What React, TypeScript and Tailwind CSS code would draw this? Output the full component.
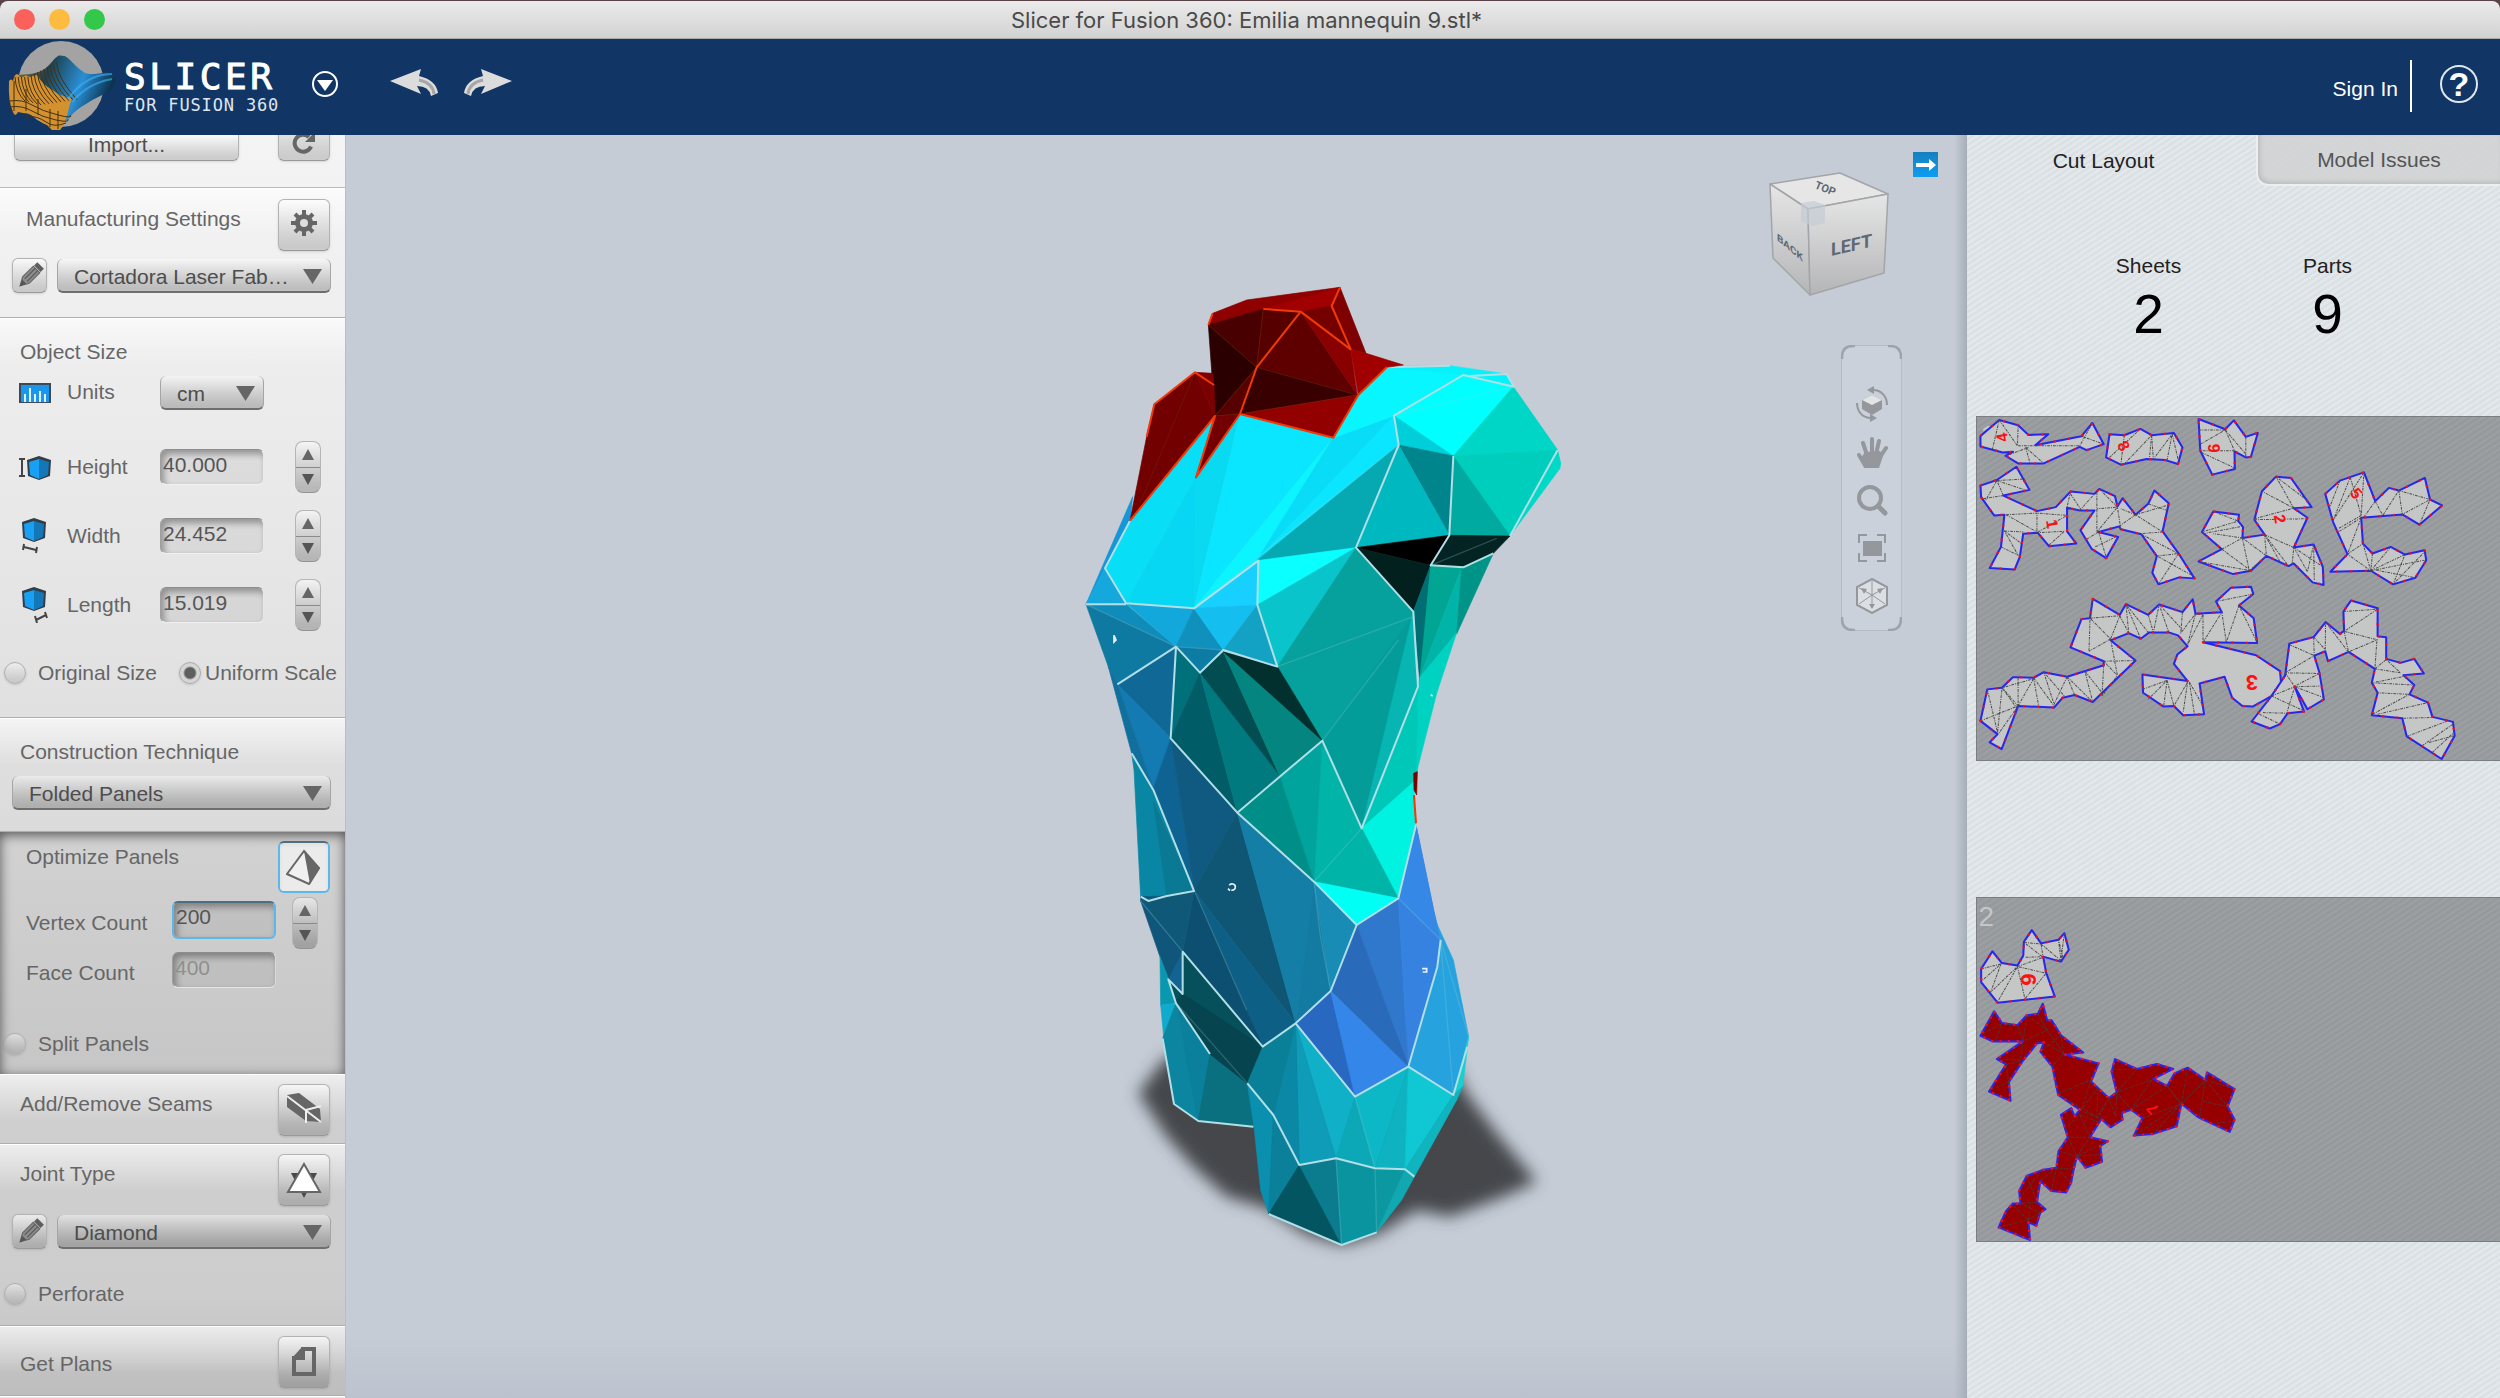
import type { ReactNode } from "react";

type Face = [string, string];

// Mesh coordinates are thirds of a canvas unit, measured from the model's origin.
const BODY_FACES: Face[] = [
  ["218,680 210,752 135,895 78,1003", "#1496d8"],
  ["210,752 465,438 408,622 198,1000 135,895", "#08def5"],
  ["408,622 198,1000 402,1015", "#07d7f2"],
  ["408,622 540,432 402,1015", "#09daf2"],
  ["540,432 820,503 402,1015", "#0ae6ff"],
  ["820,503 590,872 402,1015", "#0af5ff"],
  ["820,503 1002,437 590,872", "#08dcf6"],
  ["1002,437 1016,525 590,872", "#0ae6ff"],
  ["820,503 895,375 980,292 1210,315 1002,437", "#08f6ff"],
  ["980,292 1030,288 1170,287 1340,312 1360,350 1210,315", "#06f2fb"],
  ["1210,315 1360,350 1180,558 1002,437", "#00ffff"],
  ["1002,437 1180,558 1016,525", "#00cfd9"],
  ["1360,350 1493,540 1180,558", "#00d6c6"],
  ["1180,558 1493,540 1350,798", "#00cebc"],
  ["1493,540 1502,580 1500,595 1350,798", "#00d8c8"],
  ["1180,558 1350,798 1168,796", "#00aaa0"],
  ["1180,558 1168,796 1016,525", "#00858c"],
  ["1016,525 1168,796 888,833", "#00b8bf"],
  ["1016,525 888,833 590,872", "#06a8b2"],
  ["888,833 1168,796 1112,886", "#000000"],
  ["1168,796 1350,798 1300,850 1210,892 1112,886", "#032422"],
  ["888,833 1112,886 1060,1025", "#02201e"],
  ["590,872 888,833 592,1005", "#0affff"],
  ["592,1005 888,833 652,1190", "#09c4ca"],
  ["888,833 1060,1025 905,1675 787,1412 652,1190", "#06a09d"],
  ["1060,1035 905,1675 787,1412", "#039c99"],
  ["1060,1025 1074,1250 905,1675", "#07b5b3"],
  ["1060,1025 1112,886 1080,1240", "#006e72"],
  ["1112,886 1205,893 1080,1222", "#00a594"],
  ["1205,893 1190,1090 1080,1222", "#00b5a8"],
  ["1205,893 1300,850 1190,1092", "#009388"],
  ["1190,1088 1080,1222 1074,1250 1066,1545 1074,1490 1130,1270", "#00d2c2"],
  ["1074,1250 1068,1530 905,1675", "#00c8b8"],
  ["905,1675 1062,1535 1065,1665 1015,1885", "#00f2e0"],
  ["787,1412 905,1675 1015,1885 762,1835", "#00b4a8"],
  ["787,1412 762,1835 658,1515", "#00a49d"],
  ["658,1515 762,1835 532,1628", "#008e88"],
  ["762,1835 1015,1885 890,1965", "#00fff5"],
  ["348,1130 420,1208 332,1405", "#00707a"],
  ["420,1208 532,1628 332,1405", "#005c66"],
  ["420,1208 658,1515 532,1628", "#007a7e"],
  ["420,1208 490,1145 658,1515", "#024d52"],
  ["490,1145 787,1412 658,1515", "#04857f"],
  ["490,1145 652,1190 787,1412", "#02302e"],
  ["78,1003 135,895 198,1000", "#14a8dc"],
  ["78,1003 198,1003 348,1130", "#0f8cba"],
  ["78,1003 348,1130 172,1243 145,1190", "#0e7aa2"],
  ["198,1000 402,1015 348,1130", "#12a8dc"],
  ["402,1015 348,1130 490,1140", "#1090bd"],
  ["402,1015 592,872 592,1005", "#18d0ff"],
  ["402,1015 592,1005 490,1140", "#14bff0"],
  ["592,1005 652,1190 490,1140", "#14a2c4"],
  ["348,1130 490,1140 420,1208", "#0d7ca4"],
  ["348,1130 332,1405 172,1243", "#0f6896"],
  ["172,1243 332,1405 280,1555", "#137ab2"],
  ["145,1190 172,1243 280,1555 215,1450", "#106f9c"],
  ["332,1405 280,1555 402,1860", "#0f6392"],
  ["332,1405 532,1628 402,1860", "#105a82"],
  ["215,1450 280,1555 402,1863 265,1893 242,1880 222,1500", "#0a86a5"],
  ["280,1595 402,1863 320,1880", "#0a7a94"],
  ["532,1628 402,1860 707,2260", "#0e5674"],
  ["532,1628 762,1835 707,2260", "#147ea6"],
  ["762,1835 707,2260 812,2163", "#137aa2"],
  ["762,1835 890,1965 812,2163", "#188cb5"],
  ["402,1860 707,2260 608,2330", "#0e5f85"],
  ["402,1860 608,2330 368,2045", "#0c4f70"],
  ["242,1893 402,1860 368,2045", "#0f5878"],
  ["242,1880 320,1878 402,1860 242,1893", "#0f5878"],
  ["242,1893 368,2045 325,2130 300,2060", "#10567a"],
  ["300,2060 325,2125 348,2200 302,2205", "#0a98b0"],
  ["302,2205 348,2200 312,2310", "#10aacc"],
  ["348,2200 308,2305 342,2502 415,2553", "#0c85a0"],
  ["348,2200 450,2352 415,2553", "#0b809c"],
  ["450,2352 562,2440 582,2572 415,2553", "#0a7080"],
  ["368,2045 608,2330 562,2440 450,2352 345,2190 325,2128", "#05505a"],
  ["368,2172 608,2330 562,2440 450,2352 345,2195", "#06444f"],
  ["368,2045 368,2172 325,2128", "#126392"],
  ["890,1965 1015,1885 1045,2390", "#3078cc"],
  ["890,1965 812,2163 1045,2390", "#2a6aba"],
  ["1015,1885 1068,1665 1122,1925 1142,2010 1135,2090 1045,2390", "#3582e0"],
  ["1015,1885 1068,1665 1122,1925 1142,2010", "#3688e6"],
  ["812,2163 707,2260 885,2480", "#2868c0"],
  ["812,2163 1045,2390 885,2480", "#3486e8"],
  ["1142,2010 1130,1960 1180,2070 1226,2300 1180,2475 1045,2390 1132,2090", "#26a2de"],
  ["1226,2300 1208,2450 1180,2475", "#18d0d0"],
  ["707,2260 885,2480 828,2665", "#10b0c8"],
  ["707,2260 828,2665 718,2685", "#0e9cb8"],
  ["707,2260 718,2685 640,2535", "#0b88a5"],
  ["707,2260 608,2330 562,2440 640,2535", "#0a8098"],
  ["885,2480 828,2665 945,2695", "#0ca8b8"],
  ["885,2480 1045,2390 945,2695", "#0cb8c6"],
  ["1045,2390 945,2695 1035,2698", "#0eb2c0"],
  ["1045,2390 1180,2475 1035,2698", "#10c8d4"],
  ["1180,2475 1208,2450 1190,2490 1063,2720 1035,2698", "#10b4be"],
  ["562,2440 640,2535 626,2832 602,2760 582,2570", "#0a90ae"],
  ["640,2535 718,2685 626,2832", "#0a809a"],
  ["718,2685 626,2832 845,2925", "#045562"],
  ["718,2685 828,2665 845,2925", "#0a7c8e"],
  ["828,2665 945,2695 950,2887 845,2925", "#0a94a0"],
  ["945,2695 1035,2698 950,2887", "#0c98a0"],
  ["1035,2698 1063,2720 1025,2790 950,2887", "#12a8b2"],
];

const NECK_FACES: Face[] = [
  ["445,165 458,130 560,90 840,52 815,108 722,125 610,117", "#8f0000"],
  ["840,52 815,108 722,125 610,117", "#a00000"],
  ["445,165 610,117 590,292", "#480000"],
  ["445,165 590,292 465,438", "#2b0000"],
  ["610,117 722,125 590,292", "#560000"],
  ["722,125 590,292 892,375", "#5e0000"],
  ["722,125 892,375 872,238", "#880000"],
  ["722,125 815,108 872,238", "#750000"],
  ["815,108 840,52 918,250 872,238", "#7e0000"],
  ["872,238 918,250 1030,285 980,292 895,375", "#a00000"],
  ["590,292 465,438 540,432", "#560000"],
  ["590,292 540,432 892,375", "#380000"],
  ["540,432 892,375 820,503", "#920000"],
  ["405,307 283,403 260,500 210,752 465,438", "#720000"],
  ["405,307 458,310 462,345 465,438", "#7c0000"],
  ["540,432 465,438 408,622", "#730000"],
  ["1061,1510 1072,1505 1070,1575 1062,1560", "#7a0000"],
];

const SEAMS = [
  "210,752 135,895 198,1000 402,1015 595,872 592,1005 652,1190 490,1140 420,1208 348,1130 172,1243",
  "78,1003 198,1003",
  "980,292 1170,287",
  "1230,318 1340,312 1362,350 1210,315 1002,437 1016,525 888,833 1060,1025 1074,1250 905,1675 787,1412 532,1628",
  "1180,558 1168,796 1112,886 1210,892 1300,850",
  "1493,540 1350,798",
  "348,1130 332,1405 532,1628 762,1835 890,1965 1015,1885 1068,1665",
  "215,1450 280,1560 402,1863 320,1878 265,1893 242,1880",
  "890,1965 812,2163 707,2260 608,2330 368,2045 368,2172 325,2128 348,2200 450,2352",
  "707,2260 885,2480 1045,2390 1180,2475 1222,2330",
  "1142,2010 1132,2090 1045,2390",
  "562,2440 640,2535 718,2685 828,2665 945,2695 1035,2698 1063,2720",
  "308,2305 342,2502 415,2553 580,2570",
  "626,2832 845,2925 950,2887",
];

const NECK_SEAMS = [
  "445,165 458,130",
  "610,117 722,125 590,292 540,432 820,503 895,375 980,292",
  "722,125 872,238 815,108 840,52",
  "462,345 405,307 283,403 260,500",
  "540,432 408,622 465,438 210,752",
  "1062,1575 1068,1660",
];

const FAINT_EDGES = [
  "1016,525 400,1015",
  "1360,350 1002,437",
  "1060,1040 652,1190",
  "1015,1110 787,1412",
  "78,1003 348,1130 490,1140",
  "1112,886 1310,805",
  "905,1675 762,1835",
  "762,1835 780,1990 812,2163",
  "402,1860 560,2220",
  "242,1893 368,2045",
  "1015,1885 1142,2010",
  "1142,2010 1180,2475",
  "1142,2010 1226,2300",
  "345,2195 562,2440",
  "885,2480 945,2695",
  "945,2695 950,2887",
  "828,2665 845,2925",
];

// Flattened parts of sheet 1: outline and fold lines.
const SHEET_ONE: { outline: string; folds: string[] }[] = [
  {
    outline: "55,105 110,57 165,73 195,102 253,100 215,133 350,106 382,66 415,130 365,148 345,138 240,188 165,188 128,165 150,153 120,155 55,137",
    folds: ["110,57 90,145", "110,57 163,135 165,80", "165,135 345,135 382,66", "195,140 130,165", "187,140 200,188", "187,140 240,188", "350,106 415,130"],
  },
  {
    outline: "432,100 475,103 522,84 555,103 620,96 645,140 632,190 595,178 540,175 465,192 422,170",
    folds: ["475,103 465,192", "432,170 522,84", "475,190 555,103 548,178", "555,103 560,175 615,100 600,178", "615,100 632,175"],
  },
  {
    outline: "692,54 770,85 795,58 830,108 865,96 845,168 830,170 797,152 798,205 732,222 697,150",
    folds: ["692,87 770,87", "697,130 770,87 797,150 697,150", "770,87 830,160", "700,155 798,202", "830,108 830,170"],
  },
  {
    outline: "55,255 103,238 160,198 198,268 122,285 220,332 275,320 318,273 388,280 402,265 448,287 455,318 470,293 508,343 545,310 563,270 605,308 587,393 635,462 680,535 635,532 575,553 557,518 570,468 525,402 465,387 460,378 400,395 457,410 422,474 380,446 347,390 388,330 345,330 308,322 308,393 335,430 255,438 222,397 180,400 170,470 155,508 82,504 115,440 125,343 95,345 57,290",
    folds: ["103,240 185,235", "103,240 185,268", "122,285 103,240 70,300", "122,285 60,295", "130,343 220,338 220,397 308,345 220,338", "130,343 220,395", "125,392 180,395", "115,440 165,465 125,392 175,430", "318,273 308,320 345,330 388,280", "350,330 318,280", "395,275 395,395 455,320 395,325", "402,265 455,320 465,387", "460,378 508,343 587,395 525,400", "508,343 600,315", "545,310 600,330", "508,343 465,325", "400,395 360,420", "390,440 450,410", "400,395 422,470", "570,468 632,460", "575,470 680,530", "525,402 632,460", "575,553 632,462", "255,435 300,393 222,397"],
  },
  {
    outline: "735,333 810,343 808,362 822,380 820,413 885,403 855,358 877,272 918,228 962,232 1022,320 970,323 1010,352 970,442 1028,433 1055,500 1057,555 1025,547 970,490 955,498 890,467 845,512 793,522 692,484 760,447 702,395",
    folds: ["735,333 808,362 702,395", "705,400 820,378", "760,447 820,413 735,400", "760,447 845,512 692,484", "820,413 840,512 890,467 820,413", "885,403 890,467", "885,403 970,442 965,495", "885,403 955,498", "885,403 930,485", "855,358 1010,355", "855,355 970,323 877,272", "970,323 918,228 1010,300", "970,442 1055,500", "1028,433 1010,515 975,450", "1028,433 1030,540"],
  },
  {
    outline: "1062,280 1105,240 1175,215 1208,302 1248,262 1277,270 1353,232 1368,297 1403,315 1337,373 1287,342 1167,352 1172,430 1200,460 1253,440 1295,463 1352,450 1357,480 1325,533 1260,553 1195,512 1077,515 1127,462 1085,365",
    folds: ["1135,230 1085,360 1175,215 1167,345", "1135,230 1167,345 1100,385", "1105,240 1075,320", "1167,352 1127,462", "1167,352 1100,395", "1127,462 1172,430 1195,512 1127,462", "1208,302 1230,345 1277,270 1287,342 1368,297 1277,270", "1208,302 1175,350", "1337,373 1368,297", "1200,460 1195,512 1253,440", "1195,512 1295,463 1260,553 1352,455", "1195,512 1352,480", "1210,510 1325,533"],
  },
  {
    outline: "383,597 462,645 480,613 545,645 577,614 645,637 675,598 683,642 760,637 743,605 787,563 845,560 852,582 810,617 853,655 863,730 705,728 860,767 930,815 933,850 905,890 850,922 820,920 790,895 768,832 695,852 708,945 647,948 620,920 590,922 530,880 528,825 660,845 620,793 630,765 660,740 632,707 605,698 548,698 523,717 488,700 435,722 508,783 383,908 330,887 295,895 270,925 165,920 117,1050 82,1030 105,1005 55,965 75,870 118,865 150,833 210,835 240,818 308,832 415,797 415,785 318,743 350,658 375,655",
    folds: ["375,655 462,648 435,718 375,655 372,755", "383,597 375,655", "462,648 488,700 480,613 523,717", "480,613 545,698", "545,645 560,698 577,614 605,698", "577,614 645,690", "645,637 640,700 683,642 660,735 705,645 683,642", "705,645 705,728 760,637 773,728 810,617 863,728", "743,605 852,582", "435,718 372,755", "435,718 455,828 415,785 508,783", "415,797 410,890 455,828", "308,832 383,908 360,815 410,880", "308,832 330,887", "308,832 270,915 240,818 300,890", "210,835 270,920", "210,835 225,920", "165,835 165,920 210,838 118,865 165,920", "75,870 105,1000 118,865 160,925", "55,965 165,920 107,1005", "528,870 600,843 545,900", "600,843 590,922", "600,843 620,920 660,848 647,940", "665,848 680,945", "665,848 705,920"],
  },
  {
    outline: "1137,602 1215,625 1215,710 1240,713 1240,778 1282,790 1322,778 1350,822 1290,827 1322,857 1308,885 1362,910 1375,953 1435,968 1440,1010 1402,1080 1300,1012 1287,957 1198,948 1215,880 1198,850 1207,808 1130,757 1070,785 1062,755 1030,768 1045,820 1058,900 1010,930 973,862 1000,937 952,942 930,975 900,988 847,967 905,890 945,828 957,732 1028,712 1063,667 1105,703 1117,693 1115,635",
    folds: ["1115,635 1215,628 1117,695 1213,720 1207,808", "1117,695 1130,757 1215,720", "1028,712 1062,750 1063,667 1128,755", "1028,712 1030,768 945,820 1045,822 973,860", "957,735 1030,768", "945,820 973,862 1045,860", "973,862 1058,895", "905,890 973,862 950,940", "905,890 1000,935", "880,940 952,942", "870,945 930,975", "1207,808 1240,780 1282,820 1207,808", "1198,850 1322,857", "1210,848 1320,825", "1210,880 1308,885", "1215,945 1362,910", "1200,945 1308,885", "1290,957 1375,955", "1300,1012 1420,965", "1345,1040 1435,975", "1365,1030 1438,1010", "1375,1060 1438,1000"],
  },
];

const SHEET_TWO_LIGHT = {
  outline: "57,265 90,212 117,247 163,255 180,225 182,183 205,148 232,188 283,177 300,157 313,207 290,243 238,228 247,277 272,348 105,367 57,305",
  folds: ["57,265 115,250 60,300", "115,250 85,335 163,258 105,365", "163,258 185,355 247,278 163,258", "163,258 238,230 182,185 232,190 238,230", "187,230 238,228", "232,190 290,240 283,177 297,235", "300,157 290,240"],
};

const SHEET_TWO_DARK = {
  outline: "95,393 118,428 163,435 190,405 223,400 237,370 250,420 263,420 290,465 355,517 300,523 400,550 378,605 430,655 453,637 438,575 448,537 512,567 570,552 618,567 560,597 600,618 622,580 660,563 712,600 717,577 797,628 777,680 797,720 783,757 690,712 642,672 628,740 560,763 503,768 528,715 495,690 468,700 470,720 435,743 408,718 375,773 427,785 405,800 410,847 362,865 337,830 325,880 320,910 305,940 262,935 230,905 220,968 245,990 230,1000 218,1040 195,1030 200,1083 108,1045 130,995 150,973 172,973 168,935 190,890 235,872 277,865 283,815 310,773 290,705 320,685 330,710 345,690 282,645 265,560 230,515 240,487 220,490 177,545 138,607 143,663 80,635 130,553 103,537 180,483 92,484 55,467",
  folds: ["63,460 118,430 100,480", "118,430 163,435 180,483 250,450 190,405 180,483", "223,400 250,450 298,520 240,487", "130,553 170,545 180,483", "170,540 105,537", "85,630 138,607 130,553", "298,520 265,560", "298,520 290,465 230,515", "285,640 378,600 350,690 398,625 395,710 282,645", "400,705 430,655 450,710 453,637 495,690 555,600 453,637 512,567 438,570", "345,690 398,715 430,655", "495,690 600,618 640,672 530,715", "640,672 510,765", "640,672 560,763", "600,618 642,672 660,563", "642,672 712,600 695,712", "712,600 777,680 705,665", "745,730 795,725", "712,600 797,628", "300,750 345,705 375,773 310,773", "345,705 405,730", "310,773 337,830 427,785", "337,830 410,825", "337,830 375,773", "337,830 283,815", "337,830 320,870 277,865 262,935", "277,865 320,910", "277,865 230,905", "190,890 220,968 172,973", "235,872 175,950", "195,1022 150,980", "195,1022 108,1045", "195,1022 230,1000 172,973", "195,1022 200,970"],
};

const TEXTURE = "bg-[repeating-linear-gradient(147deg,#e3e8eb_0,#e3e8eb_2px,#dbe0e5_3px,#dbe0e5_5px)]";
const BUTTON = "border border-[#b3b3b3] border-b-[#999] bg-linear-to-b from-white/60 to-black/15 shadow-sm";

function PencilIcon() {
  return (
    <svg viewBox="0 0 26 26" className="size-[30px]">
      <g transform="rotate(45 13 13)">
        <path d="M9 0h8v4H9z" fill="#5e5e5e" />
        <path d="M9 5h8v13l-4 7-4-7z" fill="#8c8c8c" stroke="#666" />
        <path d="M11.500 5v13M14.500 5v13" stroke="#5a5a5a" />
        <path d="M10.500 20h5L13 26z" fill="#555" />
      </g>
    </svg>
  );
}

function IconButton({ label, active, children }: { label: string; active?: boolean; children: ReactNode }) {
  return (
    <button
      type="button"
      aria-label={label}
      className={
        active
          ? "flex size-13 shrink-0 items-center justify-center rounded-md border-2 border-[#5cb8ea] border-t-[#4f6c80] bg-[#ebebeb] shadow-inner"
          : `flex size-13 shrink-0 items-center justify-center rounded-md ${BUTTON}`
      }
    >
      {children}
    </button>
  );
}

function PencilButton({ label }: { label: string }) {
  return (
    <button type="button" aria-label={label} className={`flex size-[35px] shrink-0 items-center justify-center rounded-md ${BUTTON}`}>
      <PencilIcon />
    </button>
  );
}

function Dropdown({ label, value, className }: { label: string; value: string; className: string }) {
  return (
    <div className={`relative h-[34px] ${className}`}>
      <select
        aria-label={label}
        defaultValue={value}
        className="h-full w-full appearance-none rounded-md border-x border-b-2 border-x-[#a5a5a5] border-b-[#6e6e6e] bg-linear-to-b from-white/40 to-black/20 pt-1 pl-4 text-[21px] text-[#4d4d4d]"
      >
        <option>{value}</option>
      </select>
      <svg viewBox="0 0 19 15" className="pointer-events-none absolute top-2.5 right-[9px] w-[19px]">
        <path d="M0 0h19L9.500 15z" fill="#666" />
      </svg>
    </div>
  );
}

function Stepper({ label }: { label: string }) {
  return (
    <div className="flex h-13 w-[26px] shrink-0 flex-col overflow-hidden rounded-lg border border-[#b5b5b5] border-b-[#929292] bg-linear-to-b from-white/50 to-black/20">
      <button type="button" aria-label={`Increase ${label}`} className="flex flex-1 items-center justify-center border-b border-[#8a8a8a]">
        <svg viewBox="0 0 12 11" className="w-3">
          <path d="M6 0l6 11H0z" fill="#666" />
        </svg>
      </button>
      <button type="button" aria-label={`Decrease ${label}`} className="flex flex-1 items-center justify-center">
        <svg viewBox="0 0 12 11" className="w-3">
          <path d="M6 11L0 0h12z" fill="#555" />
        </svg>
      </button>
    </div>
  );
}

function NumberBox({ id, value, focus, disabled }: { id: string; value: string; focus?: boolean; disabled?: boolean }) {
  const look = focus
    ? "h-[38px] rounded-md border-2 border-[#5cb8ea] border-t-[#4f6c80] pb-1.5"
    : "h-9 rounded-md border border-t-[#8d8d8d] border-r-white/40 border-b-white/60 border-l-[#9f9f9f] pb-1";
  return (
    <input
      id={id}
      defaultValue={value}
      disabled={disabled}
      className={`${look} w-26 shrink-0 bg-black/6 pl-0.5 text-[21px] shadow-[inset_3px_4px_7px_rgba(0,0,0,0.35)] ${disabled ? "text-[#8f8f8f]" : "text-[#555]"}`}
    />
  );
}

function CubeIcon({ kind }: { kind: string }) {
  return (
    <svg viewBox="0 0 32 36" className="h-9 w-8 shrink-0">
      <g transform={kind === "height" ? "translate(7 7)" : "translate(2 0)"}>
        <path d="M1 4l12-4 12 4-1 16-11 4L2 20z" fill="#333d45" />
        <path d="M3 6l10-3v20L4 19z" fill="#18a0f5" />
        <path d="M13 3l10 3-1 13-9 4z" fill="#1478b8" />
      </g>
      <g stroke="#444" strokeWidth="2" fill="none">
        {kind === "height" && <path d="M0 10h6M3 10v17M0 27h6" />}
        {kind === "width" && <path d="M5 26l-1 6M5 29l12 3M18 29l-1 6" />}
        {kind === "length" && <path d="M16 29l2 7M17 33l10-5M26 25l2 6" />}
      </g>
    </svg>
  );
}

function SizeRow({ kind, label, value }: { kind: string; label: string; value: string }) {
  return (
    <div className="flex h-13 items-center pl-[19px]">
      <CubeIcon kind={kind} />
      <label htmlFor={kind} className="ml-4 w-[93px]">{label}</label>
      <NumberBox id={kind} value={value} />
      <div className="ml-[31px]">
        <Stepper label={label} />
      </div>
    </div>
  );
}

const KNOB =
  "size-[22px] shrink-0 appearance-none rounded-full border border-[#b0b0b0] bg-linear-to-b from-white/40 to-black/10 shadow-sm checked:border-[#aaa] checked:bg-[radial-gradient(circle,#5e5e5e_0,#5e5e5e_5px,#d6d6d6_7px)]";

function Section({ className, children }: { className?: string; children?: ReactNode }) {
  return (
    <section
      className={`border-t border-b border-t-white border-b-[#aeaeae] bg-[linear-gradient(180deg,rgba(255,255,255,0.65)_0px,rgba(255,255,255,0)_46px)] ${className ?? ""}`}
    >
      {children}
    </section>
  );
}

function Sidebar() {
  return (
    <aside className="w-[346px] shrink-0 overflow-hidden border-r border-[#b9bec6] bg-[linear-gradient(180deg,#f4f4f4_0%,#e9e9e9_28%,#dedede_50%,#cfcfcf_75%,#cdcdcd_92%,#bdbdbd_100%)] text-[21px] leading-6 text-[#666]">
      <section className="border-b border-[#b9b9b9] pb-[26px]">
        <div className="flex h-[26px] items-end justify-between pr-[15px] pl-3.5">
          <button type="button" className={`flex h-[26px] w-[225px] items-start justify-center rounded-b-md border-t-0 pt-0.5 leading-4 text-[#4d4d4d] ${BUTTON}`}>
            Import...
          </button>
          <IconButton label="Reload">
            <svg viewBox="0 0 24 24" className="mt-4 size-6">
              <path d="M19 15.500A8.500 8.500 0 1 1 17 6" fill="none" stroke="#666" strokeWidth="4" />
              <path d="M23 1v10H13z" fill="#666" />
            </svg>
          </IconButton>
        </div>
      </section>

      <Section className="pt-2.5 pb-6">
        <div className="flex items-start justify-between pr-[15px] pl-[26px]">
          <h2 className="mt-2">Manufacturing Settings</h2>
          <IconButton label="Manufacturing settings">
            <svg viewBox="0 0 26 26" className="mb-1 size-[26px]">
              <circle cx="13" cy="13" r="6.500" fill="none" stroke="#666" strokeWidth="5" />
              <path d="M13 0v26M0 13h26M4 4l18 18M22 4L4 22" stroke="#666" strokeWidth="4" />
              <circle cx="13" cy="13" r="4" fill="#dedede" />
            </svg>
          </IconButton>
        </div>
        <div className="mt-[7px] flex items-end gap-2.5 pr-3.5 pl-3">
          <PencilButton label="Edit manufacturing settings" />
          <Dropdown label="Manufacturing preset" value="Cortadora Laser Fab…" className="flex-1" />
        </div>
      </Section>

      <Section className="pt-[21px] pb-[33px]">
        <h2 className="pl-5">Object Size</h2>
        <div className="mt-3 flex items-center pl-[19px]">
          <svg viewBox="0 0 32 20" className="h-5 w-8">
            <path d="M0 0h32v20H0z" fill="#3c4a55" />
            <path d="M2 2h28v17H2z" fill="#1a96ec" />
            <path d="M6 19v-8M11 19V5M16 19v-8M21 19V8M26 19v-8" stroke="#dff1ff" strokeWidth="2" />
          </svg>
          <span className="mb-0.5 ml-4 w-[93px]">Units</span>
          <Dropdown label="Units" value="cm" className="w-26" />
        </div>
        <div className="mt-[31px] flex flex-col gap-[17px]">
          <SizeRow kind="height" label="Height" value="40.000" />
          <SizeRow kind="width" label="Width" value="24.452" />
          <SizeRow kind="length" label="Length" value="15.019" />
        </div>
        <div className="mt-[31px] flex h-[22px] items-center pl-1">
          <label className="flex w-[175px] items-center gap-3">
            <input type="radio" name="scale" className={KNOB} />
            Original Size
          </label>
          <label className="flex items-center gap-1">
            <input type="radio" name="scale" defaultChecked className={KNOB} />
            Uniform Scale
          </label>
        </div>
      </Section>

      <Section className="pt-[21px] pb-[21px]">
        <h2 className="pl-5">Construction Technique</h2>
        <Dropdown label="Construction technique" value="Folded Panels" className="mt-3 mr-3.5 ml-3" />
      </Section>

      <section className="bg-black/4 pt-[9px] pb-[19px] shadow-[inset_0_3px_12px_rgba(0,0,0,0.6)]">
        <div className="flex items-start justify-between pr-[15px] pl-[26px]">
          <h2 className="mt-1">Optimize Panels</h2>
          <IconButton label="Optimize panels" active>
            <svg viewBox="0 0 36 36" className="size-9">
              <path d="M18 2l15 17-10 16L1 25z" fill="#f0f0f0" stroke="#666" strokeWidth="2" />
              <path d="M18 2l16 17-10 16z" fill="#666" />
            </svg>
          </IconButton>
        </div>
        <div className="mt-1 flex h-13 items-center pl-[26px]">
          <label htmlFor="vertex" className="w-[146px]">Vertex Count</label>
          <div className="mb-1.5">
            <NumberBox id="vertex" value="200" focus />
          </div>
          <div className="ml-4">
            <Stepper label="vertex count" />
          </div>
        </div>
        <div className="mt-[3px] flex h-9 items-center pl-[26px]">
          <label htmlFor="face" className="w-[146px] pt-1.5">Face Count</label>
          <NumberBox id="face" value="400" disabled />
        </div>
        <label className="mt-[45px] flex h-[22px] items-center gap-3 pl-1">
          <input type="checkbox" className={KNOB} />
          Split Panels
        </label>
      </section>

      <Section className="pt-[9px] pb-[7px]">
        <div className="flex items-start justify-between pr-[15px] pl-5">
          <h2 className="mt-2">Add/Remove Seams</h2>
          <IconButton label="Add or remove seams">
            <svg viewBox="0 0 36 32" className="mb-1 w-9">
              <path d="M1 3L13 1l21 16 1 13-15-1L1 15z" fill="#666" />
              <path d="M1 4l34 26M20 18v13M20 18l15-4" stroke="#eee" strokeWidth="2" fill="none" />
            </svg>
          </IconButton>
        </div>
      </Section>

      <Section className="pt-[9px] pb-5">
        <div className="flex items-start justify-between pr-[15px] pl-5">
          <h2 className="mt-2">Joint Type</h2>
          <IconButton label="Joint type">
            <svg viewBox="0 0 36 36" className="size-9">
              <path d="M5 11h26L18 36z" fill="#4a4a4a" />
              <path d="M18 2l16 28H2z" fill="#fff" stroke="#666" strokeWidth="2" />
            </svg>
          </IconButton>
        </div>
        <div className="mt-2 flex items-end gap-2.5 pr-3.5 pl-3">
          <PencilButton label="Edit joint type" />
          <Dropdown label="Joint" value="Diamond" className="flex-1" />
        </div>
        <label className="mt-[34px] flex h-[22px] items-center gap-3 pl-1">
          <input type="checkbox" className={KNOB} />
          Perforate
        </label>
      </Section>

      <Section className="pt-[9px] pb-[7px]">
        <div className="flex items-start justify-between pr-[15px] pl-5">
          <h2 className="mt-4">Get Plans</h2>
          <IconButton label="Get plans">
            <svg viewBox="0 0 26 32" className="w-[26px]">
              <path d="M12 3h11v25H3V12h9z" fill="none" stroke="#666" strokeWidth="4" />
              <path d="M1 12L11 1h3v12H1z" fill="#666" />
            </svg>
          </IconButton>
        </div>
      </Section>
      <Section className="h-10" />
    </aside>
  );
}

function Mannequin() {
  return (
    <svg viewBox="346 135 1620 1263" className="size-full" role="img" aria-label="Mannequin model">
      <defs>
        <filter id="soft" x="-20%" y="-20%" width="140%" height="140%">
          <feGaussianBlur stdDeviation="24" />
        </filter>
      </defs>
      <g transform="translate(1060 270) scale(0.33333)">
        <path
          d="M235 2470L310 2370 500 2280H1130L1220 2470 1310 2590 1430 2735 1330 2780 1170 2840 1070 2820 960 2890 850 2925 740 2895 620 2815 500 2780 400 2690 320 2600Z"
          fill="#44474c"
          filter="url(#soft)"
        />
        {BODY_FACES.map(([points, fill]) => (
          <polygon key={points} points={points} fill={fill} stroke={fill} strokeWidth="2" />
        ))}
        <g fill="none" stroke="#8fd0dc" strokeOpacity="0.25" strokeWidth="4">
          {FAINT_EDGES.map((points) => <polyline key={points} points={points} />)}
        </g>
        <g fill="none" stroke="#b2dfe6" strokeWidth="6" strokeLinejoin="round">
          {SEAMS.map((points) => <polyline key={points} points={points} />)}
        </g>
        {NECK_FACES.map(([points, fill]) => (
          <polygon key={points} points={points} fill={fill} stroke={fill} strokeWidth="2" />
        ))}
        <path d="M405 307L240 700M610 117L590 292L465 438L540 432L892 375L590 292L445 165" fill="none" stroke="#6b2400" strokeOpacity="0.6" strokeWidth="3" />
        <g fill="none" stroke="#f03a08" strokeWidth="6" strokeLinejoin="round">
          {NECK_SEAMS.map((points) => <polyline key={points} points={points} />)}
        </g>
        <g fill="none" stroke="#e6f4fa" strokeWidth="5">
          <path d="M162 1096v20l6-6z" />
          <path d="M508 1846c4-8 18-4 18 4s-6 12-12 10M504 1856l6 6" />
          <path d="M1086 2096h14v10h-12" />
          <path d="M1112 1274l6 4" />
        </g>
      </g>
    </svg>
  );
}

function ViewCube() {
  return (
    <svg viewBox="0 0 124 128" className="w-31" role="img" aria-label="View cube">
      <defs>
        <linearGradient id="cubeSide" x1="0" y1="0" x2="0" y2="1">
          <stop offset="0" stopColor="#e6e6e6" />
          <stop offset="1" stopColor="#b4b5b7" />
        </linearGradient>
      </defs>
      <g stroke="#a3a5a8" strokeWidth="1.500" strokeLinejoin="round">
        <path d="M2 14L72 3l48 21L40 39z" fill="#e6e6e6" />
        <path d="M2 14l38 25 2 86L5 88z" fill="url(#cubeSide)" />
        <path d="M40 39l80-15-4 79-74 22z" fill="url(#cubeSide)" />
      </g>
      <path d="M33 33l13-2 11 4v18l-12 3-12-4z" fill="#c5ccd6" fillOpacity="0.7" />
      <g fill="#5f6873" fontWeight="700" fontFamily="Roboto, sans-serif">
        <text transform="translate(63 86) skewY(-13)" fontSize="18">LEFT</text>
        <text transform="translate(9 70) skewY(40)" fontSize="10">BACK</text>
        <text transform="translate(46 18) rotate(22)" fontSize="11">TOP</text>
      </g>
    </svg>
  );
}

const TOOL = "flex size-9 items-center justify-center";

function ViewTools() {
  return (
    <div className="absolute top-[210px] right-16 flex h-[286px] w-[61px] flex-col items-center justify-end gap-3 rounded-xl border border-[#b6bcc6] bg-white/10 pb-4">
      <svg viewBox="0 0 61 286" className="pointer-events-none absolute -inset-px h-[286px] w-[61px] max-w-none">
        <path d="M1 14V12Q1 1 12 1H14M47 1h2q11 0 11 11v2M1 272v2q0 11 11 11h2M47 285h2q11 0 11-11v-2" fill="none" stroke="#9da3ab" strokeWidth="2.500" />
      </svg>
      <button type="button" aria-label="Orbit" className={TOOL}>
        <svg viewBox="0 0 34 36" className="w-[34px]">
          <path d="M7 14l10-5 10 5v9l-10 6-10-6z" fill="#94979b" />
          <path d="M7 14l10-5 10 5-10 5z" fill="#e2e4e6" />
          <path d="M18 4c8 0 14 6 14 15M16 32C8 32 2 26 2 17" fill="none" stroke="#94979b" strokeWidth="2" />
          <path d="M12 4l7-4v8zM22 32l-7-4v8z" fill="#94979b" />
        </svg>
      </button>
      <button type="button" aria-label="Pan" className={TOOL}>
        <svg viewBox="0 0 32 32" className="w-8">
          <path d="M10 31L3 19M11 19L7 7M16 18V3M20 18l3-13M24 21l6-9" stroke="#94979b" strokeWidth="4" strokeLinecap="round" />
          <path d="M9 16l15-1 3 5-4 12H11L5 22z" fill="#94979b" />
        </svg>
      </button>
      <button type="button" aria-label="Zoom" className={TOOL}>
        <svg viewBox="0 0 32 32" className="w-8">
          <circle cx="14" cy="14" r="11" fill="none" stroke="#94979b" strokeWidth="4" />
          <path d="M22 22l7 7" stroke="#94979b" strokeWidth="5" strokeLinecap="round" />
        </svg>
      </button>
      <button type="button" aria-label="Fit" className={TOOL}>
        <svg viewBox="0 0 30 30" className="w-[30px]">
          <path d="M6 8h19v15H6z" fill="#94979b" />
          <path d="M2 10V2h8M20 2h8v8M28 20v8h-8M10 28H2v-8" fill="none" stroke="#94979b" strokeWidth="2" />
        </svg>
      </button>
      <button type="button" aria-label="Isometric view" className={TOOL}>
        <svg viewBox="0 0 32 36" className="w-8">
          <path d="M16 1l15 8v18l-15 8-15-8V9z" fill="#dcdfe3" stroke="#94979b" strokeWidth="2" />
          <path d="M16 3v14L3 10M16 17l13-7M16 17L3 26M16 17l13 9M16 17v13" fill="none" stroke="#94979b" />
          <path d="M13 26h6l-3 5zM5 10l6 1-3 5zM27 10l-6 1 3 5z" fill="#94979b" />
        </svg>
      </button>
    </div>
  );
}

function PartShape({ outline, folds, dark }: { outline: string; folds: string[]; dark?: boolean }) {
  return (
    <g strokeLinejoin="round">
      <polygon points={outline} fill={dark ? "#960000" : "#c5c7c7"} stroke="#2626ee" strokeWidth="6" />
      <g fill="none" stroke={dark ? "#5c3030" : "#4d4d4d"} strokeWidth="3" strokeDasharray="8 3 3 3">
        {folds.map((points) => <polyline key={points} points={points} />)}
      </g>
      <polygon points={outline} fill="none" stroke="#f3101c" strokeWidth="7" strokeDasharray={dark ? "6 19" : "6 36"} />
    </g>
  );
}

const SHEET = "h-[345px] w-full border-y border-l border-[#7b7e81] bg-[repeating-linear-gradient(147deg,#9b9fa1_0,#9b9fa1_2px,#96999c_3px,#96999c_5px)]";

function CutLayout() {
  return (
    <aside className={`flex w-[534px] shrink-0 flex-col border-l border-[#a5adb7] ${TEXTURE}`}>
      <div role="tablist" className="flex h-[51px] text-[21px]">
        <button type="button" role="tab" aria-selected="true" className="w-[289px] pr-4 text-[#222]">Cut Layout</button>
        <button type="button" role="tab" aria-selected="false" className="flex-1 rounded-bl-xl border-b-2 border-l-2 border-white/60 bg-[#d0d1d2]/85 text-[#555] shadow-[inset_2px_-2px_5px_rgba(0,0,0,0.12)]">
          Model Issues
        </button>
      </div>
      <dl className="mt-[66px] flex pl-23">
        <div className="w-[179px] text-center">
          <dt className="text-[21px] leading-7 text-[#222]">Sheets</dt>
          <dd className="text-[55px] leading-[68px] text-black">2</dd>
        </div>
        <div className="w-[179px] text-center">
          <dt className="text-[21px] leading-7 text-[#222]">Parts</dt>
          <dd className="text-[55px] leading-[68px] text-black">9</dd>
        </div>
      </dl>
      <div className="mt-17 flex flex-col gap-[136px] pl-[9px]">
        <div className={SHEET}>
          <svg viewBox="0 0 523 345" className="h-full w-full" role="img" aria-label="Sheet 1">
            <text x="2" y="28" fontSize="28" fill="#c9cccd">1</text>
            <g transform="translate(-17 -16) scale(0.3444 0.3333)">
              {SHEET_ONE.map((part) => <PartShape key={part.outline} {...part} />)}
            </g>
            <g fill="#ff1010" fontSize="16" fontWeight="700" fontFamily="Liberation Sans, sans-serif">
              <text transform="translate(30 24) rotate(-100)">4</text>
              <text transform="translate(139 28) rotate(60)">8</text>
              <text transform="translate(231 27) rotate(90)">9</text>
              <text transform="translate(68 104) rotate(80)">1</text>
              <text transform="translate(297 99) rotate(80)">2</text>
              <text transform="translate(373 77) rotate(50)">5</text>
              <text transform="translate(281 260) rotate(180)" fontSize="22">3</text>
            </g>
          </svg>
        </div>
        <div className={SHEET}>
          <svg viewBox="0 0 523 345" className="h-full w-full" role="img" aria-label="Sheet 2">
            <text x="0" y="28" fontSize="28" fill="#c3c7c9">2</text>
            <g transform="translate(-17 -17) scale(0.3444 0.3333)">
              <PartShape {...SHEET_TWO_LIGHT} />
              <PartShape {...SHEET_TWO_DARK} dark />
            </g>
            <g fill="#ff1010" fontSize="22" fontWeight="700" fontFamily="Liberation Sans, sans-serif">
              <text transform="translate(43 76) rotate(90)">6</text>
              <text transform="translate(182 212) rotate(-130)" fontSize="16">7</text>
            </g>
          </svg>
        </div>
      </div>
    </aside>
  );
}

function Logo() {
  const slices = Array.from({ length: 14 }, (_, i) => i);
  return (
    <svg viewBox="0 0 116 96" className="h-24 w-29 shrink-0" role="img" aria-label="Slicer logo">
      <defs>
        <linearGradient id="wave" x1="0" y1="0" x2="1" y2="0.300">
          <stop offset="0" stopColor="#8a6d30" />
          <stop offset="0.350" stopColor="#1d4250" />
          <stop offset="0.700" stopColor="#2a8fd6" />
          <stop offset="1" stopColor="#0d3350" />
        </linearGradient>
      </defs>
      <circle cx="61" cy="45" r="43" fill="#a3a3a3" />
      <path d="M18 36C34 35 42 34 50 25S58 16 64 17s16 18 26 18 16-3 22 0 2 14-4 18C94 60 78 68 70 78L58 88 20 50z" fill="url(#wave)" />
      <path
        d="M9 42q2-3 4 0l1-4q3-6 6 0l3 0q3-3 6 0l8-2q6 10 14 14 10 8 21 9l-3 10q-4 17-9 22h-8l-5-5q-6-2-10-7-8-5-14-5l-5-1q-3 6-5 0-5-10-4-31z"
        fill="#d3912f"
      />
      <g fill="none" stroke="#45300f">
        {slices.map((i) => (
          <path key={i} d={`M${15 + i * 3.2} ${38 - Math.max(0, i - 4) * 1.6}q1 16 ${10 + i * 0.8} ${24 + i}`} />
        ))}
        <path d="M10 62q12-2 22 4t26 10 12 0M10 68q12-2 22 4t24 9 12-1M26 77q12 0 20 6t20 1" />
        <path d="M14 42v30M26 50v22M38 60v16M50 70v18M58 72v18" />
      </g>
      <path d="M68 60Q86 35 112 35M72 63Q88 44 112 40" fill="none" stroke="#3db4f5" strokeWidth="2" strokeOpacity="0.600" />
    </svg>
  );
}

function Header() {
  return (
    <header className="flex h-24 shrink-0 items-center bg-[#113666] text-white">
      <Logo />
      <div className="ml-2 font-['DejaVu_Sans_Mono',monospace]">
        <div className="text-[36px] leading-9 font-normal tracking-widest [-webkit-text-stroke:1px_white]">SLICER</div>
        <div className="text-[17px] leading-5 tracking-wider text-[#dfe6ee]">FOR FUSION 360</div>
      </div>
      <button type="button" aria-label="Menu" className="mb-1.5 ml-8 p-0">
        <svg viewBox="0 0 28 28" className="size-7">
          <circle cx="14" cy="14" r="12" fill="none" stroke="#fff" strokeWidth="2" />
          <path d="M6 10h16l-8 11z" fill="#fff" />
        </svg>
      </button>
      <div className="mb-2.5 ml-[51px] flex gap-6">
        {["Undo", "Redo"].map((name) => (
          <button key={name} type="button" aria-label={name}>
            <svg viewBox="0 0 49 27" className={name === "Redo" ? "w-[49px] -scale-x-100" : "w-[49px]"}>
              <path d="M0 12L31 0l-2 7q17 4 19 17l-7 3q-2-10-14-10l4 8z" fill="#dcdcdc" />
              <path d="M29 11q14 3 15 14" fill="none" stroke="#a6a6a6" strokeWidth="3" />
            </svg>
          </button>
        ))}
      </div>
      <div className="ml-auto flex items-center pr-[22px]">
        <a href="#signin" className="mt-1 text-[21px] leading-6">Sign In</a>
        <span className="mb-0.5 ml-3 h-[52px] w-0.5 bg-white" />
        <button type="button" aria-label="Help" className="mb-1.5 ml-7 flex size-[38px] items-center justify-center rounded-full border-2 border-[#dfe6ee] text-[34px] leading-none font-bold">
          ?
        </button>
      </div>
    </header>
  );
}

export default function App() {
  return (
    <div className="flex h-screen flex-col overflow-hidden bg-[#5a4348] font-['Liberation_Sans',Arial,sans-serif]">
      <div className="relative mt-px flex h-[38px] shrink-0 items-center rounded-t-lg border-b border-[#a9a9a9] bg-linear-to-b from-[#ebebeb] to-[#d2d2d2] pl-3.5">
        <div className="flex gap-3.5">
          <button type="button" aria-label="Close" className="size-[21px] rounded-full bg-[#fc605b]" />
          <button type="button" aria-label="Minimize" className="size-[21px] rounded-full bg-[#fdbc40]" />
          <button type="button" aria-label="Full screen" className="size-[21px] rounded-full bg-[#34c84a]" />
        </div>
        <h1 className="flex-1 pr-28 text-center font-[Inter,sans-serif] text-[22px] leading-7 text-[#4a4a4a]">
          Slicer for Fusion 360: Emilia mannequin 9.stl*
        </h1>
      </div>
      <Header />
      <div className="flex min-h-0 flex-1">
        <Sidebar />
        <main className="relative min-w-0 flex-1 bg-linear-to-b from-[#c5ccd6] from-95% to-[#bcc3ce]">
          <Mannequin />
          <div className="absolute top-[35px] right-[74px]">
            <ViewCube />
          </div>
          <button type="button" aria-label="Collapse panel" className="absolute top-[17px] right-7 flex size-[25px] items-center justify-center bg-linear-to-b from-[#1580bd] to-[#0d9df2]">
            <svg viewBox="0 0 20 12" className="w-5">
              <path d="M0 4h13V0l7 6-7 6V8H0z" fill="#fff" />
            </svg>
          </button>
          <ViewTools />
          <div className="pointer-events-none absolute inset-y-0 right-0 w-3 bg-linear-to-r from-transparent to-[#a8b0bb]" />
        </main>
        <CutLayout />
      </div>
    </div>
  );
}
